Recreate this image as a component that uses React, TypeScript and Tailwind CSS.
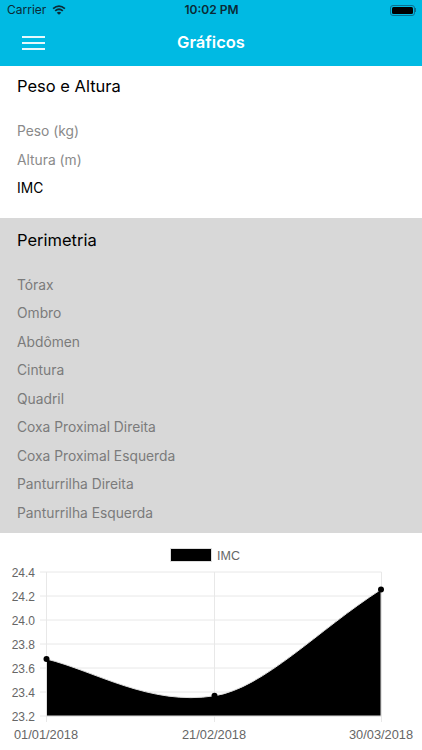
import React from "react";

const font = { fontFamily: "Inter, 'Liberation Sans', sans-serif" };

const pesoItems = [
  { label: "Peso (kg)", active: false },
  { label: "Altura (m)", active: false },
  { label: "IMC", active: true },
];

const perimetriaItems = [
  "Tórax",
  "Ombro",
  "Abdômen",
  "Cintura",
  "Quadril",
  "Coxa Proximal Direita",
  "Coxa Proximal Esquerda",
  "Panturrilha Direita",
  "Panturrilha Esquerda",
];

const yTicks = ["24.4", "24.2", "24.0", "23.8", "23.6", "23.4", "23.2"];

const StatusBar = () => (
  <div className="h-[20px] flex items-center justify-between pl-[7px] pr-[6px] text-[#0b2a36]">
    <div className="flex items-center gap-[6px] w-[120px]">
      <span className="text-[12px] leading-none">Carrier</span>
      <svg width="14" height="10" viewBox="0 0 15 11" fill="none" stroke="#0b2a36" strokeLinecap="butt">
        <path d="M1 4 Q7.5 -1.6 14 4" strokeWidth="2" />
        <path d="M3.3 6.5 Q7.5 2.8 11.7 6.5" strokeWidth="2" />
        <path d="M7.5 10.8 L5 8.4 Q7.5 6.4 10 8.4 Z" fill="#0b2a36" stroke="none" />
      </svg>
    </div>
    <span className="text-[12px] leading-none font-semibold">10:02 PM</span>
    <div className="w-[120px] flex justify-end items-center">
      <div className="w-[25px] h-[11px] rounded-[3px] border border-[#0b6f8f] p-[1px]">
        <div className="w-full h-full rounded-[1.5px] bg-black" />
      </div>
      <div className="w-[1px] h-[4px] bg-[#0b6f8f]" />
    </div>
  </div>
);

const NavBar = () => (
  <div className="h-[45px] flex items-center justify-center relative">
    <div className="absolute left-[22px] top-[16px] w-[23px] flex flex-col gap-[4px]">
      <div className="h-[2px] bg-white/90" />
      <div className="h-[2px] bg-white/90" />
      <div className="h-[2px] bg-white/90" />
    </div>
    <span className="text-[16.5px] font-semibold text-white">Gráficos</span>
  </div>
);

const Chart = () => (
  <svg width="422" height="217" viewBox="0 533 422 217" className="block">
    <rect x="170.5" y="548.5" width="41" height="13" fill="#000" stroke="#ddd" />
    <text x="217" y="559.5" fontSize="12.5" fill="#666" fontFamily="'Liberation Sans', sans-serif">IMC</text>
    {yTicks.map((t, i) => {
      const y = 572 + i * 24;
      return (
        <g key={t}>
          <line x1="40" x2="381.5" y1={y} y2={y} stroke="#e8e8e8" />
          <text x="35" y={y + 4.5} textAnchor="end" fontSize="12" fill="#666" fontFamily="'Liberation Sans', sans-serif">{t}</text>
        </g>
      );
    })}
    {[46.5, 214.5, 381.5].map((x) => (
      <line key={x} x1={x} x2={x} y1="572" y2="722" stroke="#e8e8e8" />
    ))}
    <path
      d="M46.5 659 C95 671 150 706 214.5 695.8 C264 688 318 630 381 589.5 L381 716 L46.5 716 Z"
      fill="#000"
      stroke="#ddd"
      strokeWidth="1"
    />
    <circle cx="46.5" cy="659" r="3" fill="#000" />
    <circle cx="214.5" cy="695.8" r="3" fill="#000" />
    <circle cx="381" cy="589.5" r="3" fill="#000" />
    {[
      { x: 46, t: "01/01/2018" },
      { x: 214, t: "21/02/2018" },
      { x: 381, t: "30/03/2018" },
    ].map((l) => (
      <text key={l.t} x={l.x} y="738.5" textAnchor="middle" fontSize="12.8" fill="#666" fontFamily="'Liberation Sans', sans-serif">{l.t}</text>
    ))}
  </svg>
);

export default function App() {
  return (
    <div className="w-[422px] h-[750px] overflow-hidden bg-white" style={font}>
      <div className="h-[65.5px] bg-[#00bae3]">
        <StatusBar />
        <NavBar />
      </div>

      <div className="h-[152.5px] bg-white px-[17px] pt-[9.5px]">
        <div className="text-[16.5px] leading-[22px] text-black">Peso e Altura</div>
        <div className="mt-[20px] flex flex-col">
          {pesoItems.map((item) => (
            <div key={item.label} className={`h-[28.5px] leading-[28.5px] text-[13.8px] ${item.active ? "text-black" : "text-[#8a8a8a]"}`}>
              {item.label}
            </div>
          ))}
        </div>
      </div>

      <div className="h-[315px] bg-[#d8d8d8] px-[17px] pt-[11px]">
        <div className="text-[16.5px] leading-[22px] text-black">Perimetria</div>
        <div className="mt-[19.5px] flex flex-col">
          {perimetriaItems.map((item) => (
            <div key={item} className="h-[28.5px] leading-[28.5px] text-[13.8px] text-[#7b7b7b]">
              {item}
            </div>
          ))}
        </div>
      </div>

      <Chart />
    </div>
  );
}
